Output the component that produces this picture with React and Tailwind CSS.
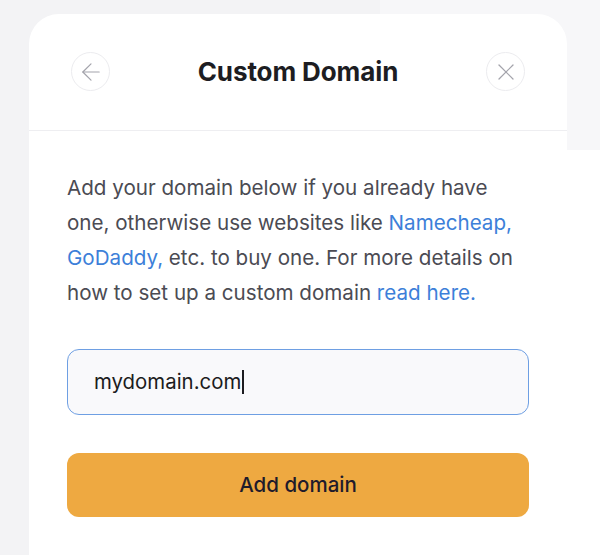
import { ArrowLeft, X } from 'lucide-react'

export default function App() {
  return (
    <div
      className="w-[600px] h-[555px] overflow-hidden pt-[14px] pl-[29px] bg-[linear-gradient(to_right,#f3f3f5_380px,#f7f7f9_380px)]"
      style={{ fontFamily: 'Inter, "Noto Sans", sans-serif' }}
    >
      <div className="flex">
        {/* card */}
        <div className="w-[538px] h-[560px] bg-white rounded-t-[30px] flex flex-col">
          <header className="h-[117px] flex items-center justify-between px-[42px] pb-[1px] border-b border-[#eeeef1]">
            <button className="w-[39px] h-[39px] rounded-full border border-[#ececef] flex items-center justify-center text-[#a3a3ab]">
              <ArrowLeft size={28} strokeWidth={1.05} />
            </button>
            <h1 className="text-[26px] font-bold text-[#1d1d22] tracking-[-0.1px]">Custom Domain</h1>
            <button className="w-[39px] h-[39px] rounded-full border border-[#ececef] flex items-center justify-center text-[#a3a3ab]">
              <X size={28} strokeWidth={1.05} />
            </button>
          </header>

          <div className="px-[38px] pt-[39px]">
            <p className="text-[20.6px] leading-[35px] text-[#4b4b53]">
              Add your domain below if you already have one, otherwise use websites like{' '}
              <a className="text-[#3d7fd9]">Namecheap,</a>{' '}
              <a className="text-[#3d7fd9]">GoDaddy,</a> etc. to buy one. For more details on how to set up a custom domain{' '}
              <a className="text-[#3d7fd9]">read here.</a>
            </p>

            <div className="mt-[39px] h-[66px] rounded-[12px] border border-[#6e9fe3] bg-[#f9f9fb] flex items-center pl-[26px] text-[20.4px] text-[#1c1c20]">
              <span>mydomain.com</span>
              <span className="w-[1.5px] h-[24px] bg-[#1c1c20] ml-[1px]" />
            </div>

            <button className="mt-[38px] w-full h-[64px] rounded-[12px] bg-[#eea941] text-[20.5px] font-medium text-[#1f1b2b]">
              Add domain
            </button>
          </div>
        </div>
        {/* right strip */}
        <div className="flex-1 flex flex-col">
          <div className="h-[136px] bg-[#f7f7f9]" />
          <div className="flex-1 bg-white" />
        </div>
      </div>
    </div>
  )
}
